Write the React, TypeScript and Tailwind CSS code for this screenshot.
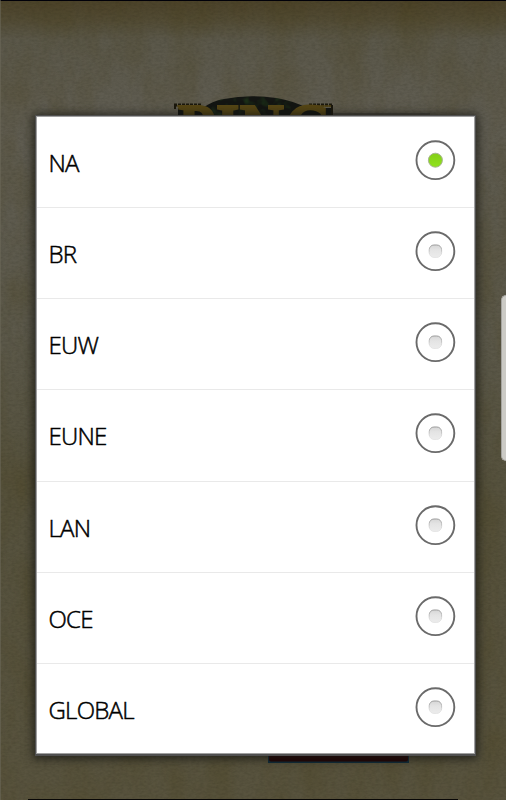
import { useState } from "react";
import clsx from "clsx";

const regions = ["NA", "BR", "EUW", "EUNE", "LAN", "OCE", "GLOBAL"];

const Backdrop = () => {
  return (
    <svg className="absolute inset-0" width="506" height="800" viewBox="0 0 506 800" aria-hidden="true">
      <defs>
        <linearGradient id="paper" x1="0" y1="0" x2="0" y2="1">
          <stop offset="0" stopColor="#4b4229" />
          <stop offset="0.025" stopColor="#524b34" />
          <stop offset="0.05" stopColor="#5b584a" />
          <stop offset="0.14" stopColor="#605d52" />
          <stop offset="0.4" stopColor="#5c594b" />
          <stop offset="0.6" stopColor="#56523e" />
          <stop offset="1" stopColor="#58533e" />
        </linearGradient>
        <filter id="grain" x="0" y="0" width="100%" height="100%" colorInterpolationFilters="sRGB">
          <feTurbulence type="fractalNoise" baseFrequency="0.25 0.45" numOctaves="3" seed="4" />
          <feColorMatrix values="0 0 0 0 0.1  0 0 0 0 0.1  0 0 0 0 0.05  0.25 0 0 0 -0.08" />
        </filter>
        <filter id="stains" x="0" y="0" width="100%" height="100%" colorInterpolationFilters="sRGB">
          <feTurbulence type="fractalNoise" baseFrequency="0.03 0.014" numOctaves="3" seed="9" />
          <feColorMatrix values="0 0 0 0 0.29  0 0 0 0 0.25  0 0 0 0 0.1  0.6 0 0 0 -0.22" />
        </filter>
        <filter id="leaves" x="0" y="0" width="100%" height="100%" colorInterpolationFilters="sRGB">
          <feTurbulence type="fractalNoise" baseFrequency="0.12" numOctaves="2" seed="3" />
          <feColorMatrix values="0 0 0 0 0.12  0 0 0 0 0.22  0 0 0 0 0.1  2 0 0 0 -0.95" />
          <feComposite in2="SourceGraphic" operator="in" />
        </filter>
      </defs>
      <rect width="506" height="800" fill="url(#paper)" />
      <rect width="506" height="800" filter="url(#stains)" />
      <rect width="506" height="800" filter="url(#grain)" />
      <rect width="506" height="1" fill="#000008" />
      <rect width="1" height="800" fill="#6b6858" opacity="0.6" />

      {/* logo behind the dialog */}
      <path d="M178 116 V108 H203 Q212 101 224 99 Q249 94 276 98 Q294 101 307 108 H331 V116Z" fill="#131512" />
      <path d="M203 108 Q212 101 224 99 Q249 94 276 98 Q294 101 307 108 V116 H203Z" filter="url(#leaves)" />
      <path d="M174 105 H201 M309 105 H333" fill="none" stroke="#1b180d" strokeWidth="3" strokeDasharray="3 1" />
      <path d="M175 105 V109 M332 105 V116" stroke="#1b180d" strokeWidth="2" />
      <text
        x="178"
        y="155"
        textLength="154"
        lengthAdjust="spacingAndGlyphs"
        className="font-['Liberation_Serif',serif] text-[74px] font-bold"
        fill="#554615"
        stroke="#554615"
        strokeWidth="2"
      >
        PING
      </text>
      <path d="M177 106 H201 M309 106 H331" stroke="#554615" strokeWidth="1.5" />
      <path d="M333 114 H430" stroke="#34332c" strokeWidth="1" />

      <rect x="268" y="750" width="141" height="13" fill="#102c3b" />
      <rect x="269" y="750" width="139" height="11.5" rx="2" fill="#240405" />
      <rect x="28" y="799" width="430" height="1" fill="#080706" />
    </svg>
  );
};

const Radio = ({ checked }: { checked: boolean }) => {
  return (
    <svg width="42" height="42" viewBox="0 0 42 42" className="shrink-0">
      <defs>
        <linearGradient id="green" x1="0" y1="0" x2="0" y2="1">
          <stop offset="0" stopColor="#83ce18" />
          <stop offset="1" stopColor="#90e31c" />
        </linearGradient>
        <linearGradient id="empty" x1="0" y1="0" x2="0" y2="1">
          <stop offset="0" stopColor="#d6d6d6" />
          <stop offset="0.4" stopColor="#e4e4e4" />
          <stop offset="1" stopColor="#ececec" />
        </linearGradient>
        <linearGradient id="rim" x1="0" y1="0" x2="0" y2="1">
          <stop offset="0" stopColor="#999" />
          <stop offset="0.8" stopColor="#e4e4e4" />
        </linearGradient>
      </defs>
      <circle cx="21.4" cy="21.2" r="18.9" fill="none" stroke="#6a6a6a" strokeWidth="1.9" />
      {checked ? (
        <circle cx="21.4" cy="21.2" r="7" fill="url(#green)" stroke="#a9b494" strokeWidth="1" />
      ) : (
        <rect x="15.2" y="15" width="12.4" height="12.4" rx="4.8" fill="url(#empty)" stroke="url(#rim)" strokeWidth="1" />
      )}
    </svg>
  );
};

const App = () => {
  const [selected, setSelected] = useState("NA");

  return (
    <main className="relative h-[800px] w-[506px] overflow-hidden bg-[#5b5849] pt-[115px] pl-[35px]">
      <Backdrop />
      <div className="absolute top-[295px] right-0 h-[166px] w-[5px] rounded-l-[6px] border border-r-0 border-[#a5a49f] bg-[#cbcac5]" />

      <div
        role="radiogroup"
        className="relative h-[641px] w-[441px] border border-b-2 border-[#505050] bg-[#a0a0a0] p-px shadow-[0_1px_9px_2px_rgba(20,20,16,0.75)]"
      >
        <ul className="h-full overflow-hidden bg-white">
          {regions.map((region, i) => (
            <li key={region} className={clsx("h-[91.14px]", i < regions.length - 1 && "border-b border-[#e9e9e9]")}>
              <button
                role="radio"
                aria-checked={selected === region}
                onClick={() => setSelected(region)}
                className="flex h-[90px] w-full items-center justify-between pr-[18px] pb-[4px] pl-[11.5px]"
              >
                <span className="pt-[6px] font-['Open_Sans','Noto_Sans',sans-serif] text-[24px] leading-8 font-light tracking-[-0.75px] text-black [-webkit-text-stroke:0.5px_black]">
                  {region}
                </span>
                <Radio checked={selected === region} />
              </button>
            </li>
          ))}
        </ul>
      </div>
    </main>
  );
};

export default App;
